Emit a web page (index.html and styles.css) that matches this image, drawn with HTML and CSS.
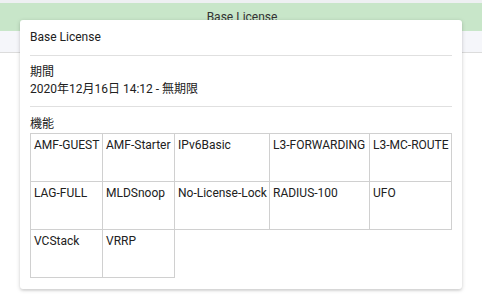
FILE: index.html
```html
<!DOCTYPE html>
<html lang="ja">
<head>
<meta charset="utf-8">
<title>Base License</title>
<link rel="stylesheet" href="styles.css">
</head>
<body>
<div class="page">
  <div class="top-strip"></div>
  <div class="title-bar">Base License</div>
  <div class="sub-bar"></div>
  <div class="card">
    <div class="card-head">Base License</div>
    <div class="section">
      <div class="label">期間</div>
      <div class="value">2020年12月16日 14:12 - 無期限</div>
    </div>
    <div class="section last">
      <div class="label">機能</div>
    </div>
    <div class="features">
      <div class="cell">AMF-GUEST</div>
      <div class="cell">AMF-Starter</div>
      <div class="cell">IPv6Basic</div>
      <div class="cell">L3-FORWARDING</div>
      <div class="cell">L3-MC-ROUTE</div>
      <div class="cell">LAG-FULL</div>
      <div class="cell">MLDSnoop</div>
      <div class="cell">No-License-Lock</div>
      <div class="cell">RADIUS-100</div>
      <div class="cell">UFO</div>
      <div class="cell">VCStack</div>
      <div class="cell">VRRP</div>
    </div>
  </div>
</div>
</body>
</html>
```

FILE: styles.css
```css
html, body {
  margin: 0;
  padding: 0;
  background: #ffffff;
}
body {
  font-family: Roboto, "Noto Sans CJK JP", sans-serif;
  font-size: 12px;
  color: #212121;
}
.page {
  position: relative;
  width: 482px;
  height: 308px;
  overflow: hidden;
}
.top-strip {
  height: 3px;
  background: #eef0f2;
}
.title-bar {
  height: 28px;
  line-height: 28px;
  background: #c8e6c9;
  text-align: center;
  padding-left: 2px;
  color: #333333;
}
.sub-bar {
  height: 21px;
  background: #f5f6fa;
  border-bottom: 1px solid #dcdcdc;
}
.card {
  position: absolute;
  left: 20px;
  top: 20px;
  width: 442px;
  box-sizing: border-box;
  padding: 0 10px 11px;
  background: #ffffff;
  border-radius: 3px;
  box-shadow: 0 1px 4px rgba(0, 0, 0, 0.18), 0 2px 2px rgba(0, 0, 0, 0.06);
}
.card-head {
  line-height: 17px;
  padding: 9px 0 9px;
  border-bottom: 1px solid #e0e0e0;
}
.section {
  padding: 8px 0;
  border-bottom: 1px solid #e0e0e0;
  line-height: 17px;
}
.section.last {
  border-bottom: none;
  padding: 9px 0 0;
}
.features {
  display: grid;
  grid-template-columns: 72px 72px 95px 100px 1fr;
  grid-auto-rows: 48px;
  border-top: 1px solid #d0d0d0;
  border-left: 1px solid #d0d0d0;
}
.cell {
  box-sizing: border-box;
  border-right: 1px solid #d0d0d0;
  border-bottom: 1px solid #d0d0d0;
  padding: 3px 3px 0 3px;
  line-height: 17px;
  white-space: nowrap;
  overflow: hidden;
}
```
